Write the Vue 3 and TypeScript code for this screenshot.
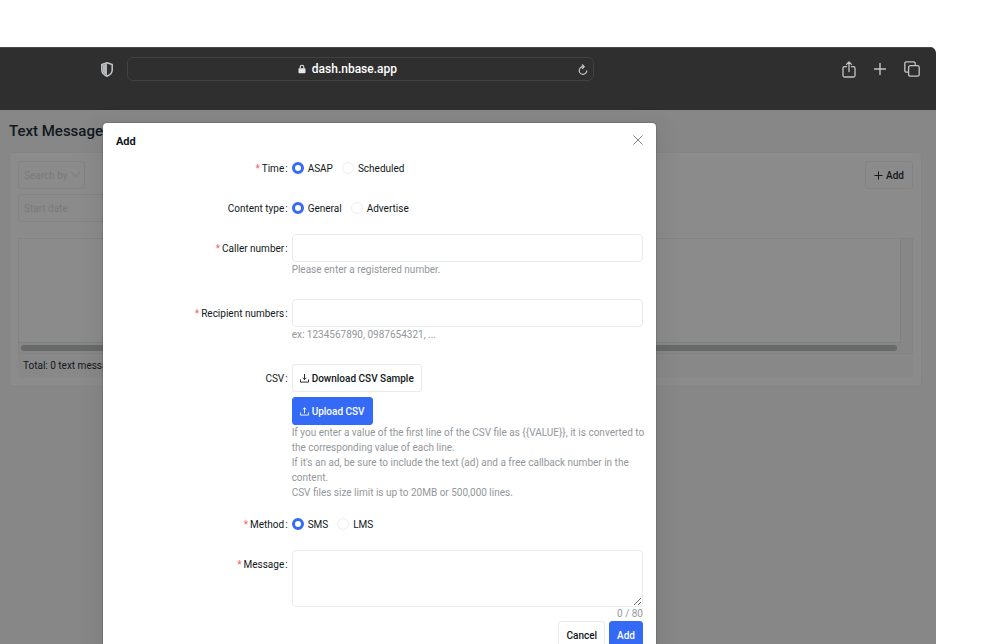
<script setup lang="ts">
import { ref } from 'vue'

const time = ref('asap')
const contentType = ref('general')
const method = ref('sms')
const caller = ref('')
const recipients = ref('')
const message = ref('')
const startDate = ref('')
const limit = 80
</script>

<template>
  <div class="page">
    <div class="window">
      <header class="toolbar">
        <svg class="shield" viewBox="0 0 12 15" width="12" height="15" aria-hidden="true">
          <path d="M6 .8 11.200 2.600V8c0 3-2.300 5-5.200 6.200C3.100 13 .8 11 .8 8V2.600Z" fill="#303030" stroke="#c6c9cb" stroke-width="1.500" />
          <path d="M6 1.500 1.500 3V8c0 2.600 1.900 4.300 4.500 5.600Z" fill="#b4b7b9" />
        </svg>
        <div class="address">
          <span class="host">
            <svg viewBox="0 0 8 10" width="8" height="10" aria-hidden="true">
              <rect x=".5" y="4.200" width="7" height="5" rx=".8" fill="#e6e6e6" />
              <path d="M2.200 4.500V3a1.800 1.800 0 0 1 3.600 0v1.500" fill="none" stroke="#e6e6e6" stroke-width="1.100" />
            </svg>
            <span>dash.nbase.app</span>
          </span>
          <button class="bare" aria-label="Reload">
            <svg viewBox="0 0 10 11" width="10" height="11" fill="none" stroke="#c6c8ca" stroke-width="1.200">
              <path d="M5.800 2.700H5a3.800 3.800 0 1 0 3.800 3.800" />
              <path d="M4 .5 6.200 2.700 4 4.900" />
            </svg>
          </button>
        </div>
        <div class="tools">
          <button class="bare" aria-label="Share">
            <svg viewBox="0 0 14 17" width="14" height="17" fill="none" stroke="#c3c5c7" stroke-width="1.300" stroke-linecap="round" stroke-linejoin="round">
              <path d="M4.500 5.700H2.500A1.500 1.500 0 0 0 1 7.200v7.300A1.500 1.500 0 0 0 2.500 16h9a1.500 1.500 0 0 0 1.500-1.500V7.200a1.500 1.500 0 0 0-1.500-1.500h-2M7 10.500V1M4.500 3.400 7 1l2.500 2.400" />
            </svg>
          </button>
          <button class="bare" aria-label="New tab">
            <svg viewBox="0 0 12 12" width="12" height="12" fill="none" stroke="#c3c5c7" stroke-width="1.400">
              <path d="M6 0v12M0 6h12" />
            </svg>
          </button>
          <button class="bare" aria-label="Tabs">
            <svg viewBox="0 0 16 16" width="16" height="16" fill="none" stroke="#c3c5c7" stroke-width="1.300">
              <rect x="4.600" y="4.600" width="10.600" height="10.600" rx="1.800" />
              <path d="M4.600 11.200H2.600A1.800 1.800 0 0 1 .8 9.400V2.600A1.800 1.800 0 0 1 2.600.8h6.800a1.800 1.800 0 0 1 1.800 1.800v2" />
            </svg>
          </button>
        </div>
      </header>

      <div class="body">
        <main class="content">
          <h1>Text Message</h1>
          <section class="card">
            <div class="filters">
              <select class="search" aria-label="Search by">
                <option>Search by</option>
              </select>
              <button class="add">
                <svg viewBox="0 0 10 10" width="9" height="9" stroke="#101820" stroke-width="1.100"><path d="M5 .5v9M.5 5h9" /></svg>
                Add
              </button>
            </div>
            <input v-model="startDate" class="date" type="text" placeholder="Start date" aria-label="Start date" />
            <div class="list">
              <div class="rows"></div>
              <div class="track"></div>
            </div>
            <p class="total">Total: 0 text messages</p>
          </section>
        </main>

        <div class="overlay">
          <form class="modal" role="dialog" aria-labelledby="modal-title" @submit.prevent>
            <div class="modal-head">
              <h2 id="modal-title">Add</h2>
              <button class="bare" type="button" aria-label="Close">
                <svg viewBox="0 0 10 10" width="10" height="10" stroke="#7e8185" stroke-width="1"><path d="m.5.5 9 9M9.500.5l-9 9" /></svg>
              </button>
            </div>

            <div class="row" role="radiogroup" aria-labelledby="l-time">
              <span id="l-time" class="label required">Time</span>
              <div class="radios">
                <label><input v-model="time" type="radio" name="time" value="asap" />ASAP</label>
                <label><input v-model="time" type="radio" name="time" value="scheduled" />Scheduled</label>
              </div>
            </div>

            <div class="row" role="radiogroup" aria-labelledby="l-type">
              <span id="l-type" class="label">Content type</span>
              <div class="radios">
                <label><input v-model="contentType" type="radio" name="type" value="general" />General</label>
                <label><input v-model="contentType" type="radio" name="type" value="advertise" />Advertise</label>
              </div>
            </div>

            <div class="row roomy">
              <label class="label required" for="caller">Caller number</label>
              <div>
                <input id="caller" v-model="caller" class="field" type="text" />
                <p class="hint">Please enter a registered number.</p>
              </div>
            </div>

            <div class="row roomy">
              <label class="label required" for="recipients">Recipient numbers</label>
              <div>
                <input id="recipients" v-model="recipients" class="field" type="text" />
                <p class="hint">ex: 1234567890, 0987654321, ...</p>
              </div>
            </div>

            <div class="row snug">
              <span class="label">CSV</span>
              <div class="stack">
                <button class="btn" type="button">
                  <svg viewBox="0 0 10 10" width="9" height="9" fill="none" stroke="currentColor" stroke-width="1"><path d="M5 0v6M3 4.300l2 2 2-2M.5 6v3h9V6" /></svg>
                  Download CSV Sample
                </button>
                <button class="btn primary" type="button">
                  <svg viewBox="0 0 10 10" width="9" height="9" fill="none" stroke="currentColor" stroke-width="1"><path d="M5 7V1M3 2.700l2-2 2 2M.5 6v3h9V6" /></svg>
                  Upload CSV
                </button>
                <p class="hint">
                  If you enter a value of the first line of the CSV file as &#123;&#123;VALUE&#125;&#125;, it is converted to the corresponding value of each line.<br />
                  If it's an ad, be sure to include the text (ad) and a free callback number in the content.<br />
                  CSV files size limit is up to 20MB or 500,000 lines.
                </p>
              </div>
            </div>

            <div class="row" role="radiogroup" aria-labelledby="l-method">
              <span id="l-method" class="label required">Method</span>
              <div class="radios">
                <label><input v-model="method" type="radio" name="method" value="sms" />SMS</label>
                <label><input v-model="method" type="radio" name="method" value="lms" />LMS</label>
              </div>
            </div>

            <div class="row last">
              <label class="label required" for="message">Message</label>
              <div>
                <textarea id="message" v-model="message" class="field area"></textarea>
                <p class="hint count">{{ message.length }} / {{ limit }}</p>
              </div>
            </div>

            <div class="actions">
              <button class="btn" type="button">Cancel</button>
              <button class="btn primary" type="submit">Add</button>
            </div>
          </form>
        </div>
      </div>
    </div>
  </div>
</template>

<style>
body {
  margin: 0;
  background: #fff;
}
</style>

<style scoped>
* {
  box-sizing: border-box;
}
.page {
  height: 100vh;
  padding: 47px 64px 0 0;
  overflow: hidden;
  font: 400 10px/15px Roboto, sans-serif;
  color: #101820;
}
.window {
  display: flex;
  flex-direction: column;
  height: 100%;
  border-radius: 0 6px 0 0;
  overflow: hidden;
}
h1, h2, p {
  margin: 0;
}
button, input, select, textarea {
  font: inherit;
  color: inherit;
}
svg {
  display: block;
  flex: none;
}
.bare {
  padding: 0;
  border: 0;
  background: none;
}
.toolbar {
  display: flex;
  flex: none;
  align-items: center;
  height: 63px;
  padding: 0 16px 20px 101px;
  background: #2f2f2f;
  border-top: 1px solid #484848;
}
.address {
  display: flex;
  align-items: center;
  width: 57%;
  height: 24px;
  margin-left: 14px;
  padding: 0 5px;
  border: 1px solid #424242;
  border-radius: 6px;
}
.host {
  display: flex;
  flex: 1;
  align-items: center;
  justify-content: center;
  gap: 6px;
  padding-right: 16px;
  color: #fff;
  font: 500 12px/16px Roboto, sans-serif;
}
.tools {
  display: flex;
  align-items: center;
  gap: 18px;
  margin-left: auto;
}
.body {
  position: relative;
  flex: 1;
  background: #878787;
}
.content {
  padding: 12px 14px 0 9px;
}
h1 {
  font-size: 15px;
  line-height: 18px;
  font-weight: 500;
}
.card {
  margin-top: 12px;
  padding: 8px;
  background: #8b8b8b;
  border: 1px solid #848484;
  border-radius: 4px;
}
.filters {
  display: flex;
  justify-content: space-between;
}
.search, .date, .add {
  height: 28px;
  border: 1px solid #838383;
  border-radius: 3px;
  background: transparent;
}
.search {
  width: 67px;
  padding: 0 5px;
  color: #7a7a7a;
  appearance: none;
  background: linear-gradient(45deg, transparent 46%, #7a7a7a 46%, #7a7a7a 58%, transparent 58%) right 8px top 10px / 5px 5px no-repeat,
    linear-gradient(-45deg, transparent 46%, #7a7a7a 46%, #7a7a7a 58%, transparent 58%) right 4px top 10px / 5px 5px no-repeat;
}
.date {
  display: block;
  width: 160px;
  margin-top: 5px;
  padding: 0 5px;
}
.date::placeholder {
  color: #7a7a7a;
  opacity: 1;
}
.add {
  display: flex;
  align-items: center;
  gap: 3px;
  padding: 0 8px;
  font-weight: 500;
}
.list {
  margin-top: 16px;
  padding-bottom: 2px;
  border: 1px solid #838383;
  background: #878787;
}
.rows {
  height: 104px;
  margin-right: 11px;
  background: #8b8b8b;
  border-right: 1px solid #808080;
  border-bottom: 1px solid #808080;
}
.track {
  height: 6px;
  margin: 2px 15px 0 2px;
  border-radius: 3px;
  background: #686a6a;
}
.total {
  padding: 4px 5px 5px;
  background: #888;
}
.overlay {
  position: absolute;
  inset: 0;
}
.modal {
  margin: 13px 280px 0 11%;
  padding: 12px 13px;
  background: #fff;
  border-radius: 4px;
  box-shadow: 0 0 2px rgba(0, 0, 0, 0.4), 0 6px 24px 4px rgba(0, 0, 0, 0.08);
}
.modal-head {
  display: flex;
  align-items: flex-start;
  justify-content: space-between;
  height: 14px;
  margin-bottom: 5px;
}
h2 {
  font-size: 11px;
  line-height: 14px;
  font-weight: 700;
}
.row {
  display: grid;
  grid-template-columns: 1fr 2fr;
  margin-bottom: 12px;
}
.roomy {
  margin-bottom: 22px;
}
.snug {
  margin-bottom: 10px;
}
.last {
  margin-bottom: 0;
}
.label {
  display: flex;
  align-items: center;
  justify-self: end;
  height: 28px;
  padding-right: 4px;
}
.label::after {
  content: ":";
  margin-left: 1px;
}
.required::before {
  content: "*";
  margin-right: 2px;
  color: #f5606a;
}
.radios {
  display: flex;
  align-items: center;
  gap: 9px;
  height: 28px;
}
.radios label {
  display: flex;
  align-items: center;
  gap: 4px;
}
.radios input {
  width: 12px;
  height: 12px;
  margin: 0;
  appearance: none;
  border: 1px solid #eee;
  border-radius: 50%;
  background: #fff;
}
.radios input:checked {
  border: 3px solid #356af6;
}
.field {
  display: block;
  width: 100%;
  height: 28px;
  padding: 0 8px;
  border: 1px solid #e9eaeb;
  border-radius: 4px;
  background: #fff;
}
.area {
  height: 57px;
  padding: 4px 8px;
  resize: vertical;
}
.hint {
  color: #93979b;
}
.count {
  line-height: 14px;
  text-align: right;
}
.stack {
  display: flex;
  flex-direction: column;
  align-items: flex-start;
}
.stack .primary {
  margin-top: 5px;
}
.stack .hint {
  margin-right: -8px;
}
.btn {
  display: flex;
  align-items: center;
  gap: 3px;
  height: 28px;
  padding: 0 7px;
  border: 1px solid #e9eaeb;
  border-radius: 3px;
  background: #fff;
  font-weight: 500;
}
.primary {
  border-color: #356af6;
  background: #356af6;
  color: #fff;
}
.actions {
  display: flex;
  justify-content: flex-end;
  gap: 4px;
}
</style>
